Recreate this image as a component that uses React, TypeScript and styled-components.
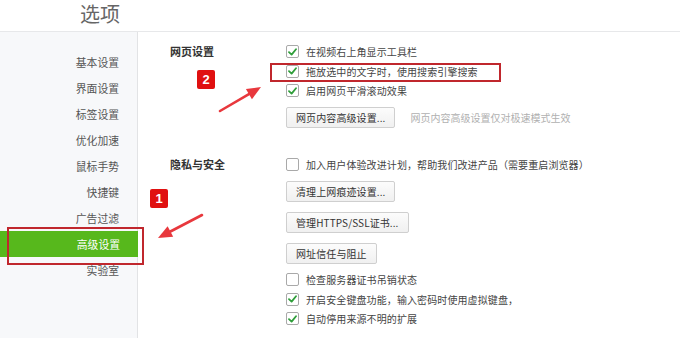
import React from "react";
import styled, { createGlobalStyle } from "styled-components";

const Global = createGlobalStyle`
  html, body { margin: 0; padding: 0; background: #fff; }
  body { font-family: "Noto Sans CJK SC", "Noto Sans", sans-serif; color: #333; }
  * { box-sizing: border-box; }
`;

const Page = styled.div`
  position: relative;
  width: 680px;
  height: 338px;
  overflow: hidden;
  display: flex;
  flex-direction: column;
  background: #fff;
`;

const Header = styled.header`
  height: 32px;
  flex: none;
  border-bottom: 1px solid #e7e8ea;
  padding-left: 80px;
  display: flex;
  align-items: flex-start;
`;

const Title = styled.h1`
  margin: 0;
  font-size: 20px;
  font-weight: 400;
  color: #666;
  line-height: 28px;
`;

const Body = styled.div`
  flex: 1;
  display: flex;
`;

const Sidebar = styled.nav`
  width: 138px;
  flex: none;
  background: #f7f8fa;
  border-right: 1px solid #e2e3e5;
  padding-top: 17px;
  display: flex;
  flex-direction: column;
`;

const NavItem = styled.div<{ $active?: boolean }>`
  height: 26px;
  line-height: 26px;
  text-align: right;
  padding-right: 18px;
  font-size: 10.8px;
  color: ${(p) => (p.$active ? "#fff" : "#555")};
  background: ${(p) => (p.$active ? "#57b81c" : "transparent")};
  margin-right: ${(p) => (p.$active ? "-1px" : "0")};
`;

const Content = styled.main`
  flex: 1;
  padding: 10px 0 0 32px;
  display: flex;
  flex-direction: column;
  gap: 27px;
`;

const Section = styled.section`
  display: grid;
  grid-template-columns: 116px 1fr;
`;

const SectionLabel = styled.div`
  font-size: 11px;
  font-weight: 700;
  color: #333;
  line-height: 19.5px;
  height: 19.5px;
`;

const Options = styled.div`
  display: flex;
  flex-direction: column;
`;

const CheckRow = styled.label<{ $mt?: number }>`
  height: 19.5px;
  display: flex;
  align-items: center;
  gap: 7px;
  font-size: 10px;
  letter-spacing: 0.1px;
  color: #444;
  white-space: nowrap;
  margin-top: ${(p) => p.$mt ?? 0}px;
`;

const Box = styled.span<{ $checked?: boolean }>`
  width: 13px;
  height: 13px;
  flex: none;
  border: 1px solid #a9a9a9;
  border-radius: 2px;
  background: #fff;
  display: flex;
  align-items: center;
  justify-content: center;
`;

const ButtonLine = styled.div<{ $mt?: number }>`
  display: flex;
  align-items: center;
  gap: 15px;
  margin-top: ${(p) => p.$mt ?? 0}px;
`;

const Btn = styled.button`
  height: 21px;
  padding: 0 9px;
  font-family: inherit;
  font-size: 10px;
  letter-spacing: 0.1px;
  color: #333;
  background: linear-gradient(#fcfcfc, #f0f0f0);
  border: 1px solid #cfcfcf;
  border-radius: 2px;
  white-space: nowrap;
`;

const Hint = styled.span`
  font-size: 10px;
  color: #b0b0b0;
  white-space: nowrap;
`;

const Badge = styled.div<{ $x: number; $y: number }>`
  position: absolute;
  left: ${(p) => p.$x}px;
  top: ${(p) => p.$y}px;
  width: 18px;
  height: 19px;
  background: #e01010;
  border-radius: 2px;
  color: #fff;
  font-family: "Liberation Sans", Arial, sans-serif;
  font-weight: 700;
  font-size: 13px;
  display: flex;
  align-items: center;
  justify-content: center;
`;

const Frame = styled.div<{ $x: number; $y: number; $w: number; $h: number }>`
  position: absolute;
  left: ${(p) => p.$x}px;
  top: ${(p) => p.$y}px;
  width: ${(p) => p.$w}px;
  height: ${(p) => p.$h}px;
  border: 2px solid #c0272d;
  pointer-events: none;
`;

const Overlay = styled.svg`
  position: absolute;
  left: 0;
  top: 0;
  pointer-events: none;
`;

const Check = () => (
  <svg width="9" height="8" viewBox="0 0 9 8">
    <path d="M1 4.2 L3.6 6.6 L8 1.2" fill="none" stroke="#2f9e3a" strokeWidth="1.8" strokeLinecap="round" strokeLinejoin="round" />
  </svg>
);

const Option = ({ checked, children, mt }: { checked?: boolean; children: React.ReactNode; mt?: number }) => (
  <CheckRow $mt={mt}>
    <Box $checked={checked}>{checked && <Check />}</Box>
    <span>{children}</span>
  </CheckRow>
);

const Arrow = ({ x1, y1, x2, y2 }: { x1: number; y1: number; x2: number; y2: number }) => {
  const dx = x2 - x1;
  const dy = y2 - y1;
  const len = Math.hypot(dx, dy);
  const ux = dx / len;
  const uy = dy / len;
  const hl = 14;
  const hw = 6;
  const bx = x2 - ux * hl;
  const by = y2 - uy * hl;
  const px = -uy;
  const py = ux;
  return (
    <g>
      <line x1={x1} y1={y1} x2={bx} y2={by} stroke="#e8383d" strokeWidth="2.6" strokeLinecap="round" />
      <polygon
        points={`${x2},${y2} ${bx + px * hw},${by + py * hw} ${bx - px * hw},${by - py * hw}`}
        fill="#e8383d"
      />
    </g>
  );
};

const navItems = ["基本设置", "界面设置", "标签设置", "优化加速", "鼠标手势", "快捷键", "广告过滤", "高级设置", "实验室"];

export default function App() {
  return (
    <Page>
      <Global />
      <Header>
        <Title>选项</Title>
      </Header>
      <Body>
        <Sidebar>
          {navItems.map((n) => (
            <NavItem key={n} $active={n === "高级设置"}>
              {n}
            </NavItem>
          ))}
        </Sidebar>
        <Content>
          <Section>
            <SectionLabel>网页设置</SectionLabel>
            <Options>
              <Option checked>在视频右上角显示工具栏</Option>
              <Option checked>拖放选中的文字时，使用搜索引擎搜索</Option>
              <Option checked>启用网页平滑滚动效果</Option>
              <ButtonLine $mt={6.5}>
                <Btn>网页内容高级设置...</Btn>
                <Hint>网页内容高级设置仅对极速模式生效</Hint>
              </ButtonLine>
            </Options>
          </Section>
          <Section>
            <SectionLabel>隐私与安全</SectionLabel>
            <Options>
              <Option>加入用户体验改进计划，帮助我们改进产品（需要重启浏览器）</Option>
              <ButtonLine $mt={6}>
                <Btn>清理上网痕迹设置...</Btn>
              </ButtonLine>
              <ButtonLine $mt={10}>
                <Btn>管理HTTPS/SSL证书...</Btn>
              </ButtonLine>
              <ButtonLine $mt={10}>
                <Btn>网址信任与阻止</Btn>
              </ButtonLine>
              <Option mt={6.5}>检查服务器证书吊销状态</Option>
              <Option checked>开启安全键盘功能，输入密码时使用虚拟键盘，</Option>
              <Option checked>自动停用来源不明的扩展</Option>
            </Options>
          </Section>
        </Content>
      </Body>

      <Frame $x={270} $y={63} $w={231} $h={19} />
      <Frame $x={7} $y={227} $w={137} $h={38} />
      <Badge $x={197} $y={70}>2</Badge>
      <Badge $x={150} $y={189}>1</Badge>
      <Overlay width="680" height="338" viewBox="0 0 680 338">
        <Arrow x1={220} y1={111} x2={261} y2={87} />
        <Arrow x1={202} y1={215} x2={158} y2={238} />
      </Overlay>
    </Page>
  );
}
